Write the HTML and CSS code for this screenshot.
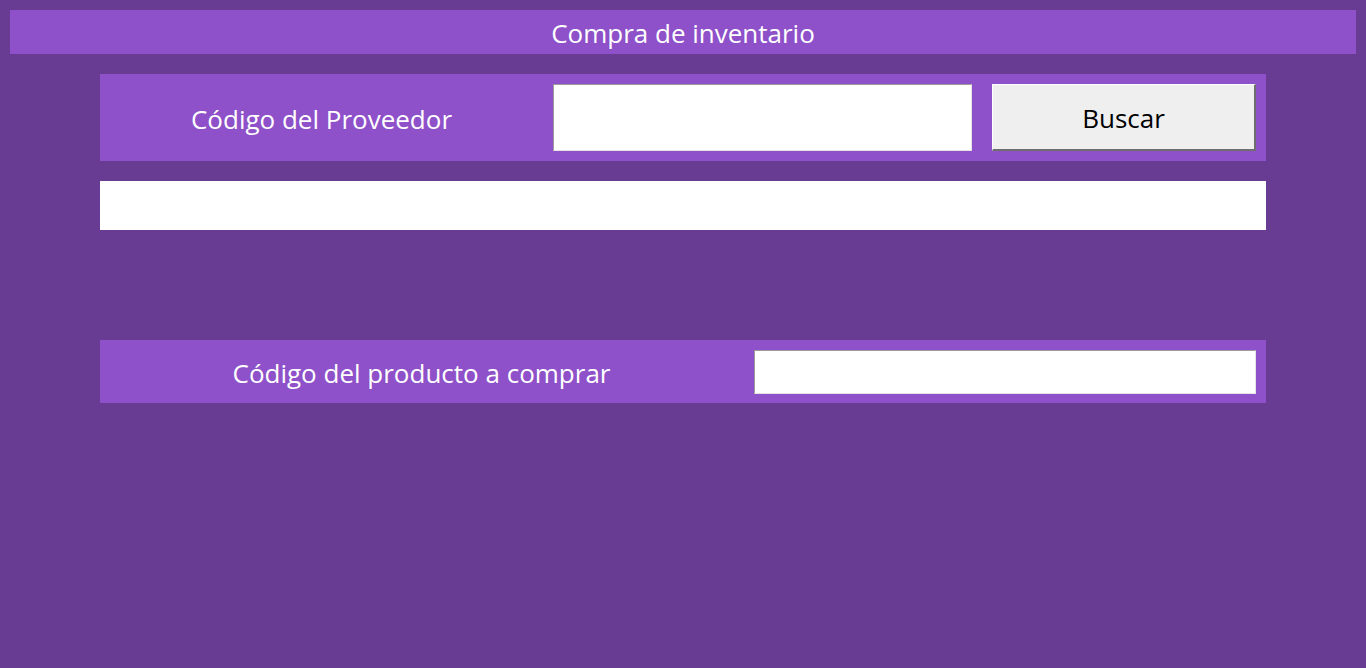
FILE: index.html
```html
<!DOCTYPE html>
<html lang="es">
<head>
<meta charset="utf-8">
<title>Compra de inventario</title>
<link rel="stylesheet" href="styles.css">
</head>
<body>
<div class="page">
  <header class="title-bar">Compra de inventario</header>
  <main class="content">
    <section class="panel panel-supplier">
      <label class="label label-supplier" for="supplier">Código del Proveedor</label>
      <input class="field field-supplier" id="supplier" type="text">
      <button class="btn" type="button">Buscar</button>
    </section>
    <div class="result-bar"></div>
    <section class="panel panel-product">
      <label class="label label-product" for="product">Código del producto a comprar</label>
      <input class="field field-product" id="product" type="text">
    </section>
  </main>
</div>
</body>
</html>
```

FILE: styles.css
```css
* { box-sizing: border-box; }
html, body {
  margin: 0;
  padding: 0;
  height: 100%;
}
body {
  background: #683c93;
  font-family: "Comic Sans MS", "Open Sans", "DejaVu Sans", sans-serif;
  color: #ffffff;
}
.page {
  padding: 10px 10px 0 10px;
}
.title-bar {
  height: 44px;
  background: #8e51c9;
  display: flex;
  align-items: center;
  justify-content: center;
  font-size: 26px;
  padding-top: 2px;
}
.content {
  margin: 20px 90px 0 90px;
  display: flex;
  flex-direction: column;
}
.panel {
  background: #8e51c9;
  padding: 10px;
  display: flex;
  align-items: flex-start;
}
.panel-supplier {
  height: 87px;
}
.label {
  display: flex;
  align-items: center;
  justify-content: center;
  font-size: 26px;
  color: #ffffff;
  padding-top: 2px;
}
.label-supplier {
  width: 423px;
  height: 67px;
  margin-right: 20px;
}
.field {
  border: 1px solid;
  border-color: #9a9a9a #e4e4e4 #e4e4e4 #9a9a9a;
  background: #ffffff;
  outline: none;
  font: inherit;
  padding: 0 6px;
}
.field-supplier {
  width: 419px;
  height: 67px;
  margin-right: 20px;
}
.btn {
  width: 264px;
  height: 67px;
  background: #efefef;
  border-style: solid;
  border-width: 1px 2px 2px 1px;
  border-color: #ffffff #6e6e6e #6e6e6e #ffffff;
  font-family: inherit;
  font-size: 26px;
  color: #000000;
  padding: 2px 0 0 0;
}
.result-bar {
  margin-top: 20px;
  height: 49px;
  background: #ffffff;
}
.panel-product {
  margin-top: 110px;
  height: 63px;
}
.label-product {
  width: 623px;
  height: 44px;
  margin-right: 21px;
}
.field-product {
  width: 502px;
  height: 44px;
}
```
